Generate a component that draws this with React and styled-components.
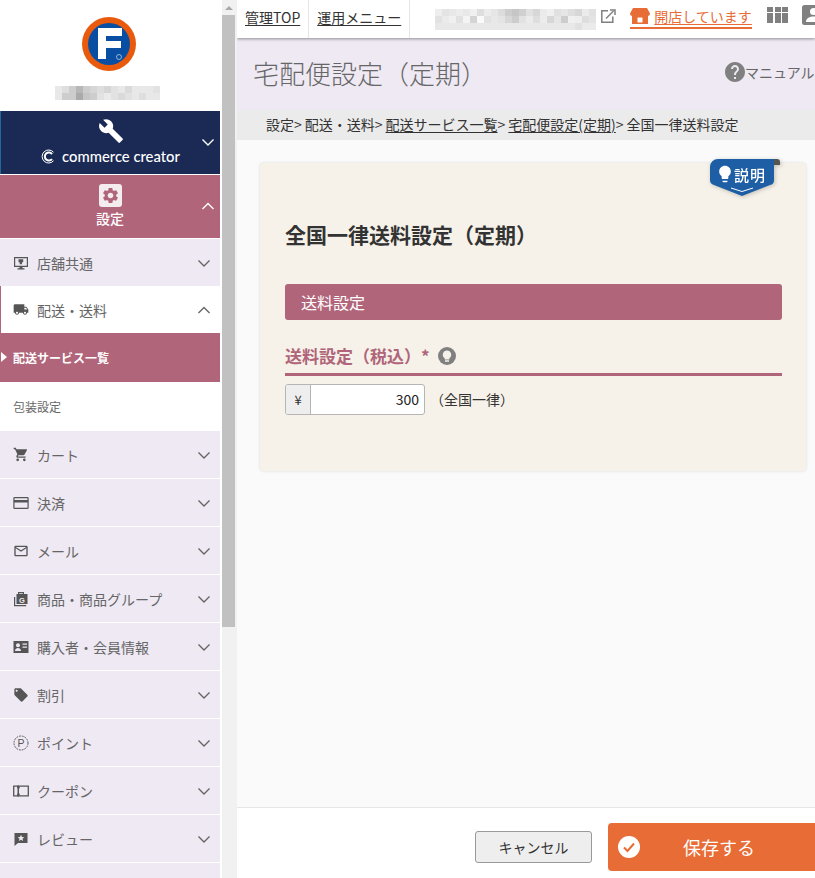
import React from "react";
import styled, { createGlobalStyle } from "styled-components";
import {
  MdBuild, MdSettings, MdLocalShipping, MdShoppingCart, MdMailOutline, MdLocalOffer,
  MdHelp, MdLightbulb,
} from "react-icons/md";

const rose = "#b0657a";
const FONT = `"Noto Sans CJK JP", "Noto Sans", sans-serif`;

const Global = createGlobalStyle`
  html, body { margin: 0; padding: 0; overflow: hidden; background: #fff; }
  body { font-family: ${FONT}; color: #333; }
  * { box-sizing: border-box; }
`;

const Page = styled.div`
  display: flex; width: 815px; height: 878px; overflow: hidden;
`;
const Sidebar = styled.aside`
  width: 220px; flex: none; height: 878px; overflow: hidden; background: #fff;
`;
const LogoArea = styled.div`
  height: 111px; display: flex; flex-direction: column; align-items: center; padding: 17px 2px 0 0;
`;
const NameMosaic = styled.svg`
  display: block; margin: 15px 3px 0 0;
`;
const Brand = styled.div`
  position: relative; height: 63px; background: #1b2a55; border-left: 1px solid #1d6a9c;
  display: flex; flex-direction: column; align-items: center; color: #fff; padding: 7px 0 0 0;
  margin-bottom: 1px;
`;
const BrandName = styled.div`
  display: flex; align-items: center; gap: 7px; margin-top: 1px; height: 22px;
  font-family: Lato, sans-serif; font-size: 14.8px; font-weight: 500; line-height: 22px;
`;
const SettingHead = styled.div`
  position: relative; height: 63px; background: ${rose}; color: #fff; margin-bottom: 1px;
  display: flex; flex-direction: column; align-items: center; padding-top: 9px;
  font-size: 14px; font-weight: 500;
`;
const GearBox = styled.div`
  width: 23px; height: 23px; border-radius: 3px; background: #f3edef; color: ${rose};
  display: flex; align-items: center; justify-content: center; margin-bottom: 1px;
  svg { display: block; }
`;
const HeadLabel = styled.div`
  line-height: 20px;
`;
const HeadChevron = styled.span`
  position: absolute; right: 5px; top: 24px; display: flex;
`;
const NavRow = styled.div`
  height: 47px; margin-bottom: ${p => (p.$flush ? 0 : 1)}px;
  background: ${p => (p.$active ? "#fff" : "#eee9f3")};
  border-left: ${p => (p.$active ? `1px solid ${rose}` : "0")};
  padding-left: ${p => (p.$active ? 12 : 13)}px; padding-right: 9px;
  display: flex; align-items: center; color: #666; font-size: 14px;
`;
const NavIcon = styled.span`
  width: 16px; height: 16px; margin-right: 8px; flex: none; display: flex; align-items: center; justify-content: center;
  color: #555;
  svg { display: block; }
`;
const NavLabel = styled.span`
  flex: 1; line-height: 20px;
`;
const SubRow = styled.div`
  position: relative; height: 49px; padding-left: 13px; display: flex; align-items: center;
  font-size: 12px; font-weight: ${p => (p.$on ? 700 : 400)};
  background: ${p => (p.$on ? rose : "#fff")}; color: ${p => (p.$on ? "#fff" : "#666")};
`;
const SubMarker = styled.span`
  position: absolute; left: 1px; top: 19px; width: 0; height: 0;
  border-top: 5.5px solid transparent; border-bottom: 5.5px solid transparent; border-left: 6px solid #fff;
`;
const Track = styled.div`
  width: 17px; flex: none; height: 878px; background: #f1f1f1; border-left: 2px solid #fff; display: flex; flex-direction: column;
`;
const TrackArrow = styled.div`
  height: 15px; display: flex; justify-content: center; align-items: center; width: 13px;
  &::before { content: ""; border-left: 4px solid transparent; border-right: 4px solid transparent; border-bottom: 4px solid #a9a9a9; }
`;
const Thumb = styled.div`
  width: 13px; height: 612px; background: #c1c1c1;
`;
const Main = styled.main`
  width: 578px; flex: none; display: flex; flex-direction: column; height: 878px; overflow: hidden; background: #fafafa;
`;
const TopBar = styled.header`
  position: relative; z-index: 2; height: 38px; background: #fff; box-shadow: 0 1px 3px rgba(0,0,0,.4);
  display: flex; align-items: flex-start; flex: none; white-space: nowrap;
`;
const TopCell = styled.div`
  height: 38px; padding: 0 8px; border-right: 1px solid #e6e6e6; display: flex; align-items: center; font-size: 14px;
`;
const TopLink = styled.a`
  color: #333; text-decoration: underline; text-underline-offset: 2px; position: relative; top: -2px;
`;
const SiteMosaic = styled.svg`
  display: block; margin: 9px 5px 0 25px; flex: none;
`;
const ExtIcon = styled.svg`
  display: block; flex: none; margin: 9px 14px 0 0;
`;
const OpenLink = styled.a`
  height: 29px; display: flex; align-items: center; gap: 4px; color: #e86c36; flex: none;
  font-size: 14px; border-bottom: 2px solid #e86c36; text-decoration: underline; text-underline-offset: 2px; margin-right: 15px;
  padding-top: 5px;
  svg { display: block; flex: none; margin-top: -1px; }
`;
const GridIcon = styled.svg`
  display: block; flex: none; margin: 7px 14px 0 0;
`;
const UserIcon = styled.svg`
  display: block; flex: none; margin-top: 5px;
`;
const TitleBar = styled.div`
  height: 72px; flex: none; background: #eee9f3; display: flex; justify-content: space-between; align-items: center;
  padding-left: 16px;
`;
const Title = styled.h1`
  margin: 0; font-size: 26px; font-weight: 300; color: #666; line-height: 36px; position: relative; top: -1px;
`;
const Manual = styled.div`
  display: flex; align-items: center; color: #666; font-size: 14px; white-space: nowrap; width: 91px; flex: none; margin: -4px -1px 0 0;
  svg { display: block; color: #808080; flex: none; margin: 0 -2px; }
`;
const Crumbs = styled.nav`
  height: 30px; flex: none; background: #ebebeb; padding: 0 0 2px 29px; display: flex; align-items: center; gap: 3px;
  font-size: 14px; color: #333; white-space: nowrap; line-height: 20px;
`;
const CrumbLink = styled.a`
  color: #333; text-decoration: underline; text-underline-offset: 2px;
`;
const Content = styled.div`
  flex: 1; padding: 23px 9px 0 23px; min-height: 0;
`;
const Card = styled.section`
  position: relative; height: 308px; background: #f6f2e9; border-radius: 4px; box-shadow: 0 0 3px rgba(0,0,0,.14);
  padding: 56px 24px 0 25px;
`;
const Explain = styled.div`
  position: absolute; top: -4px; right: 26px; width: 70px; height: 37px;
  filter: drop-shadow(1px 1px 2px rgba(0,0,0,.22));
  svg { position: absolute; inset: 0; display: block; }
`;
const ExplainBulb = styled.span`
  position: absolute; left: 5px; top: 5px; width: 20px; height: 20px; color: #fff;
  svg { position: static; }
`;
const ExplainLabel = styled.div`
  position: absolute; left: 24px; top: 5px; color: #fff; font-size: 15px; font-weight: 500; line-height: 22px; letter-spacing: 1px;
  white-space: nowrap;
`;
const CardTitle = styled.h2`
  margin: 0; font-size: 21px; font-weight: 700; color: #333; line-height: 30px;
`;
const SectionBar = styled.div`
  margin-top: 35px; height: 36px; background: ${rose}; color: #fff; border-radius: 3px; padding-left: 16px;
  font-size: 16px; line-height: 37px;
`;
const FieldHead = styled.div`
  margin-top: 24px; height: 32px; border-bottom: 3px solid ${rose}; color: ${rose};
  display: flex; align-items: flex-start; gap: 8px; font-size: 17px; font-weight: 700; line-height: 24px;
  svg { display: block; margin-top: 3px; }
`;
const FieldRow = styled.div`
  margin-top: 8px; display: flex; align-items: center; gap: 5px; font-size: 14px; color: #333;
`;
const FieldNote = styled.span`
  line-height: 20px; margin-top: -2px;
`;
const InputGroup = styled.div`
  width: 140px; height: 31px; display: flex; border: 1px solid #b5b5b5; border-radius: 3px; overflow: hidden; background: #fff;
`;
const Addon = styled.span`
  width: 25px; flex: none; background: #eee; border-right: 1px solid #b5b5b5; display: flex; align-items: center; justify-content: center;
  font-size: 13px;
`;
const Amount = styled.span`
  flex: 1; text-align: right; padding-right: 5px; line-height: 28px; color: #222;
`;
const Footer = styled.footer`
  height: 71px; flex: none; background: #fff; border-top: 1px solid #e6e6e6; display: flex; align-items: center;
  padding-left: 238px; gap: 16px; white-space: nowrap;
`;
const CancelBtn = styled.button`
  width: 117px; height: 32px; flex: none; border: 1px solid #999; border-radius: 3px; background: #eee; color: #333;
  font-family: ${FONT}; font-size: 14px; padding: 0; margin-top: 8px;
`;
const SaveBtn = styled.button`
  position: relative; width: 220px; height: 48px; flex: none; border: 0; border-radius: 4px; background: #e86c36; color: #fff;
  font-family: ${FONT}; font-size: 18px; margin-top: 8px; text-align: left; padding: 0 0 0 75px;
  svg { position: absolute; left: 10px; top: 13px; display: block; }
`;

const Chevron = ({ up, color = "#666", size = 14 }) => (
  <svg width={size} height={size} viewBox="0 0 14 14" fill="none" stroke={color} strokeWidth="1.4" style={{ display: "block", flex: "none" }}>
    <path d={up ? "M1.5 10L7 4.5L12.5 10" : "M1.5 4.5L7 10L12.5 4.5"} />
  </svg>
);

const Mosaic = ({ Comp, rows, cell }) => (
  <Comp width={rows[0].length * cell} height={rows.length * cell} shapeRendering="crispEdges">
    {rows.map((r, y) => r.map((v, x) => (
      <rect key={x + "-" + y} x={x * cell} y={y * cell} width={cell} height={cell} fill={`rgb(${v},${v},${v})`} />
    )))}
  </Comp>
);

const nameRows = [
  [232,222,205,183,205,214,222,214,226,232,218,232,232,232,226],
  [232,205,205,170,198,205,226,234,226,218,226,232,222,232,232],
];
const siteRows = [
  [238,228,232,236,232,240,222,236,230,220,205,198,208,225,215,235,240,225,230,222,215,235,225],
  [226,235,240,225,244,212,250,226,232,228,215,205,226,235,222,236,215,230,205,240,238,222,228],
  [232,232,232,232,232,232,232,232,232,232,232,232,232,232,232,232,232,232,232,232,225,235,235],
];

const icons = {
  desk: (
    <svg width="16" height="16" viewBox="0 0 16 16"><path fill="#555" fillRule="evenodd" d="M1 2h14v10H9.5v1.2h2v1.300h-7v-1.300h2V12H1zM2.200 3.200v7.600h11.600V3.200z"/><path fill="#555" d="M5.500 4.300h4.700v3H9v2H6.700v-2H5.500z"/></svg>
  ),
  truck: <MdLocalShipping size={17} />,
  cart: <MdShoppingCart size={17} />,
  card: (
    <svg width="16" height="14" viewBox="0 0 16 14"><path fill="#555" fillRule="evenodd" d="M1.500 1h13a1.200 1.200 0 0 1 1.200 1.200v9.600a1.200 1.200 0 0 1-1.200 1.200h-13a1.200 1.200 0 0 1-1.200-1.200V2.200A1.200 1.200 0 0 1 1.500 1zm0 1.200V4h13V2.200zm0 4.300v5.300h13V6.500z"/></svg>
  ),
  mail: <MdMailOutline size={18} />,
  bag: (
    <svg width="16" height="16" viewBox="0 0 16 16"><path fill="#555" fillRule="evenodd" d="M5 3V1h6v2h3.500v10H3.500V3zm1.200 0h3.600V2.200H6.200z"/><path fill="#555" d="M1 6h1.200v8h11v1.200H1z"/><text x="9" y="11.500" textAnchor="middle" fontSize="7.500" fontWeight="700" fill="#eee9f3" fontFamily="Liberation Sans">G</text></svg>
  ),
  badge: (
    <svg width="16" height="14" viewBox="0 0 16 14"><path fill="#555" d="M.5 1h15v12H.5z"/><circle cx="5" cy="5.200" r="2" fill="#eee9f3"/><path fill="#eee9f3" d="M2 11c0-2 1.500-3 3-3s3 1 3 3zM9.500 3.500H14v1.300H9.500zM9.500 6.500H14v1.300H9.500z"/></svg>
  ),
  tag: <MdLocalOffer size={18} />,
  point: (
    <svg width="16" height="16" viewBox="0 0 16 16"><circle cx="8" cy="8" r="7" fill="none" stroke="#555" strokeWidth="1" strokeDasharray="1.800 1"/><text x="8" y="11.800" textAnchor="middle" fontSize="10.500" fill="#555" fontFamily="Liberation Sans">P</text></svg>
  ),
  coupon: (
    <svg width="16" height="12" viewBox="0 0 16 12"><path fill="none" stroke="#555" strokeWidth="1.300" d="M.7 1.200h14.600v9.600H.7z"/><path fill="#555" d="M4.500.5h1.500l.8 2-.8 1.500v4l.8 1.500-.8 2H4.500l-.5-2 .5-1.500V4l-.5-1.500z"/></svg>
  ),
  review: (
    <svg width="14" height="14" viewBox="0 0 14 14"><path fill="#555" d="M.5 1h13v10H4l-3.500 3z"/><path fill="#eee9f3" d="M7 2.800l1 2.200 2.300.2-1.800 1.500.6 2.300L7 7.800 4.900 9l.6-2.300-1.800-1.500L6 5z"/></svg>
  ),
};

const lowerNav = [
  ["cart", "カート"], ["card", "決済"], ["mail", "メール"], ["bag", "商品・商品グループ"],
  ["badge", "購入者・会員情報"], ["tag", "割引"], ["point", "ポイント"], ["coupon", "クーポン"], ["review", "レビュー"],
];

const Nav = ({ icon, label, active, up, flush }) => (
  <NavRow $active={active} $flush={flush}>
    <NavIcon>{icons[icon]}</NavIcon>
    <NavLabel>{label}</NavLabel>
    <Chevron up={up} />
  </NavRow>
);

export default function App() {
  return (
    <Page>
      <Global />
      <Sidebar>
        <LogoArea>
          <svg width="54" height="54" viewBox="0 0 54 54" style={{ display: "block", flex: "none" }}>
            <circle cx="27" cy="27" r="27" fill="#e95a0c" />
            <circle cx="27" cy="27" r="21" fill="#084fa3" />
            <path fill="#fff" d="M16 11h24v8H24v5h15v7H24v11h-8z" />
            <circle cx="37" cy="40" r="2.500" fill="none" stroke="#bcd" strokeWidth=".8" />
          </svg>
          <Mosaic Comp={NameMosaic} rows={nameRows} cell={7} />
        </LogoArea>
        <Brand>
          <MdBuild size={26} style={{ display: "block", flex: "none" }} />
          <BrandName>
            <svg width="14" height="15" viewBox="0 0 14 15" fill="none" stroke="#fff" style={{ display: "block" }}>
              <path strokeWidth="1" d="M12.500 3.200A6.500 6.500 0 1 0 12.500 11.800" />
              <path strokeWidth="2" d="M11 5A4 4 0 1 0 11 10" />
            </svg>
            commerce creator
          </BrandName>
          <HeadChevron><Chevron color="#fff" /></HeadChevron>
        </Brand>
        <SettingHead>
          <GearBox><MdSettings size={19} /></GearBox>
          <HeadLabel>設定</HeadLabel>
          <HeadChevron><Chevron up color="#fff" /></HeadChevron>
        </SettingHead>
        <Nav icon="desk" label="店舗共通" flush />
        <Nav icon="truck" label="配送・送料" active up flush />
        <SubRow $on><SubMarker />配送サービス一覧</SubRow>
        <SubRow>包装設定</SubRow>
        {lowerNav.map(([i, l]) => <Nav key={l} icon={i} label={l} />)}
        <NavRow />
      </Sidebar>
      <Track>
        <TrackArrow />
        <Thumb />
      </Track>
      <Main>
        <TopBar>
          <TopCell><TopLink>管理TOP</TopLink></TopCell>
          <TopCell><TopLink>運用メニュー</TopLink></TopCell>
          <Mosaic Comp={SiteMosaic} rows={siteRows} cell={7} />
          <ExtIcon width="15" height="14" viewBox="0 0 15 14" fill="none" stroke="#808080" strokeWidth="1.500">
            <path d="M7 1.800H.8v11.400h11V7.500" />
            <path d="M5 9.500L12.500 2" />
            <path d="M9 1h5v5" />
          </ExtIcon>
          <OpenLink>
            <svg width="20" height="16" viewBox="0 0 20 16">
              <path fill="#e86c36" d="M3 0h14l3 5.500a2.500 2.500 0 0 1-2 2.500v8h-5.500V9.500h-5V16H2V8a2.500 2.500 0 0 1-2-2.500z" />
              <path fill="#e86c36" d="M2 14.500h16V16H2z" />
            </svg>
            開店しています
          </OpenLink>
          <GridIcon width="21" height="16" viewBox="0 0 21 16" fill="#808080" shapeRendering="crispEdges">
            {[0, 1, 2].map(r => [0, 1, 2].map(c => (
              <rect key={r + "-" + c} x={c * 7.5} y={r * 5.5} width="6" height="5" />
            )))}
          </GridIcon>
          <UserIcon width="24" height="20" viewBox="0 0 24 20">
            <rect width="24" height="20" rx="2.500" fill="#808080" />
            <circle cx="11.500" cy="6.500" r="3.500" fill="#fff" />
            <path fill="#fff" d="M4 17c0-4 4-5.500 7.500-5.500S19 13 19 17z" />
          </UserIcon>
        </TopBar>
        <TitleBar>
          <Title>宅配便設定（定期）</Title>
          <Manual><MdHelp size={24} />マニュアル</Manual>
        </TitleBar>
        <Crumbs>
          <span>設定&gt;</span>
          <span>配送・送料&gt;</span>
          <span><CrumbLink>配送サービス一覧</CrumbLink>&gt;</span>
          <span><CrumbLink>宅配便設定(定期)</CrumbLink>&gt;</span>
          <span>全国一律送料設定</span>
        </Crumbs>
        <Content>
          <Card>
            <Explain>
              <svg width="70" height="37" viewBox="0 0 70 37">
                <path fill="#555" d="M62 0h5a3 3 0 0 1 3 3v3h-8z" />
                <path fill="#1d5ea4" d="M8 0h56v21a5 5 0 0 1-4 5l-28 11L4 26a5 5 0 0 1-4-5V8a8 8 0 0 1 8-8z" />
                <path fill="none" stroke="#fff" strokeWidth="1" d="M21 29l11 3.500L43 29" />
              </svg>
              <ExplainBulb><MdLightbulb size={20} /></ExplainBulb>
              <ExplainLabel>説明</ExplainLabel>
            </Explain>
            <CardTitle>全国一律送料設定（定期）</CardTitle>
            <SectionBar>送料設定</SectionBar>
            <FieldHead>
              <span>送料設定（税込）*</span>
              <svg width="18" height="18" viewBox="0 0 18 18">
                <circle cx="9" cy="9" r="9" fill="#808080" />
                <path fill="#f6f2e9" d="M9 3.500a4.200 4.200 0 0 0-2.300 7.700v1.300h4.600v-1.300A4.200 4.200 0 0 0 9 3.500zM7 13.300h4v1.400H7z" />
              </svg>
            </FieldHead>
            <FieldRow>
              <InputGroup>
                <Addon>¥</Addon>
                <Amount>300</Amount>
              </InputGroup>
              <FieldNote>（全国一律）</FieldNote>
            </FieldRow>
          </Card>
        </Content>
        <Footer>
          <CancelBtn>キャンセル</CancelBtn>
          <SaveBtn>
            <svg width="22" height="22" viewBox="0 0 22 22">
              <circle cx="11" cy="11" r="11" fill="#fff" />
              <path fill="none" stroke="#e86c36" strokeWidth="2" d="M6 11.500l3.500 3.500L16 7.500" />
            </svg>
            保存する
          </SaveBtn>
        </Footer>
      </Main>
    </Page>
  );
}
